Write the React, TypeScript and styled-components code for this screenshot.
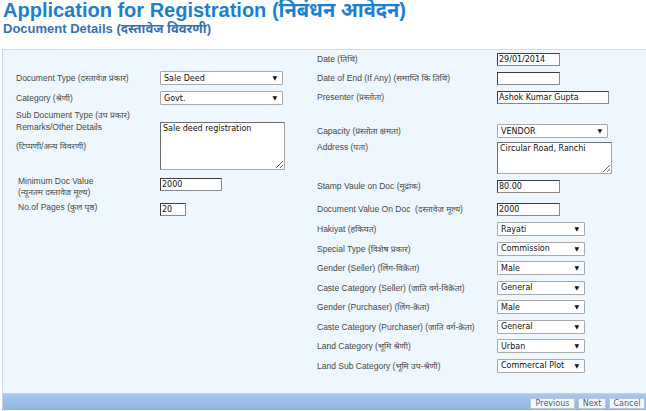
import React from 'react';
import styled, {createGlobalStyle} from 'styled-components';

const GlobalStyle = createGlobalStyle`
  html, body {
    margin: 0;
    padding: 0;
    background: #ffffff;
  }
  body {
    font-family: 'Liberation Sans', Arial, 'Noto Sans Devanagari', 'Noto Sans', sans-serif;
  }
`;

const Page = styled.div`
  width: 646px;
  height: 411px;
  display: flex;
  flex-direction: column;
  overflow: hidden;
`;

const Header = styled.div`
  height: 49px;
  padding-left: 3px;
`;

const Title = styled.h1`
  margin: 0;
  font-size: 20px;
  line-height: 21px;
  font-weight: bold;
  color: #1b80d1;
`;

const SubTitle = styled.h2`
  margin: 0;
  font-size: 13px;
  line-height: 15px;
  font-weight: bold;
  color: #3a70b2;
`;

const Panel = styled.div`
  flex: 1;
  display: flex;
  flex-direction: column;
  margin-left: 2px;
  border-top: 1px solid #cfdceb;
  border-left: 1px solid #c8d7e8;
  background: #eef7fe;
`;

const Columns = styled.div`
  flex: 1;
  display: grid;
  grid-template-columns: 301px 1fr;
  padding-left: 13px;
`;

const Column = styled.div<{$top: number}>`
  display: flex;
  flex-direction: column;
  padding-top: ${p => p.$top}px;
`;

const Row = styled.div<{$h: number}>`
  display: flex;
  align-items: flex-start;
  height: ${p => p.$h}px;
  flex-shrink: 0;
`;

const Label = styled.div<{$w: number; $lh?: number; $indent?: number; $shift?: number}>`
  width: ${p => p.$w}px;
  flex-shrink: 0;
  padding-left: ${p => p.$indent ?? 0}px;
  margin-top: ${p => p.$shift ?? 0}px;
  box-sizing: border-box;
  font-size: 8.5px;
  line-height: ${p => p.$lh ?? 13}px;
  color: #474747;
  white-space: nowrap;
`;

const LabelLine = styled.div<{$gap?: number}>`
  margin-top: ${p => p.$gap ?? 0}px;
`;

const TextInput = styled.input<{$w: number}>`
  width: ${p => p.$w}px;
  height: 13px;
  box-sizing: border-box;
  margin: 0;
  padding: 0 1px;
  border: 1px solid #3c3c3c;
  border-right-color: #8a8a8a;
  border-bottom-color: #8a8a8a;
  background: #ffffff;
  font-family: 'DejaVu Sans', Verdana, sans-serif;
  font-size: 8px;
  color: #111;
  outline: none;
`;

const TextArea = styled.textarea<{$w: number; $h: number}>`
  width: ${p => p.$w}px;
  height: ${p => p.$h}px;
  box-sizing: border-box;
  margin: 0;
  padding: 1px 2px;
  border: 1px solid #6e6e6e;
  border-right-color: #a8a8a8;
  border-bottom-color: #a8a8a8;
  background: #ffffff;
  font-family: 'DejaVu Sans', Verdana, sans-serif;
  font-size: 8px;
  line-height: 10px;
  color: #111;
  outline: none;
`;

const Select = styled.div<{$w: number}>`
  width: ${p => p.$w}px;
  height: 14px;
  box-sizing: border-box;
  display: flex;
  align-items: center;
  justify-content: space-between;
  padding: 0 5px 0 3px;
  border: 1px solid #a9a9a9;
  border-radius: 1px;
  background: #ffffff;
  font-family: 'DejaVu Sans', Verdana, sans-serif;
  font-size: 8px;
  color: #111;
  white-space: nowrap;
`;

const Arrow = styled.span`
  font-size: 6px;
  line-height: 1;
  color: #111;
`;

const Footer = styled.div`
  height: 16px;
  display: flex;
  justify-content: flex-end;
  align-items: center;
  gap: 3px;
  padding-right: 1px;
  border-top: 1px solid #bcd4f0;
  background: linear-gradient(#a9c8ee, #90b6e3);
  margin-bottom: 1px;
`;

const Button = styled.button<{$w: number}>`
  width: ${p => p.$w}px;
  height: 11px;
  margin-top: 3px;
  padding: 0;
  border: 1px solid #b8c8dc;
  background: #f5f7fa;
  font-family: 'DejaVu Sans', Verdana, sans-serif;
  font-size: 8px;
  line-height: 9px;
  color: #3f5f90;
`;

function Dropdown({value, width}: {value: string; width: number}) {
  return (
    <Select $w={width}>
      <span>{value}</span>
      <Arrow>▼</Arrow>
    </Select>
  );
}

const rightSelects = [
  ['Hakiyat (हकियत)', 'Rayati'],
  ['Special Type (विशेष प्रकार)', 'Commission'],
  ['Gender (Seller) (लिंग-विक्रेता)', 'Male'],
  ['Caste Category (Seller) (जाति वर्ग-विक्रेता)', 'General'],
  ['Gender (Purchaser) (लिंग-क्रेता)', 'Male'],
  ['Caste Category (Purchaser) (जाति वर्ग-क्रेता)', 'General'],
  ['Land Category (भूमि श्रेणी)', 'Urban'],
  ['Land Sub Category (भूमि उप-श्रेणी)', 'Commercal Plot'],
];

function App() {
  return (
    <Page>
      <GlobalStyle />
      <Header>
        <Title>Application for Registration (निबंधन आवेदन)</Title>
        <SubTitle>Document Details (दस्तावेज विवरणी)</SubTitle>
      </Header>
      <Panel>
        <Columns>
          <Column $top={21}>
            <Row $h={20}>
              <Label $w={144} $lh={14}>Document Type (दस्तावेज प्रकार)</Label>
              <Dropdown value="Sale Deed" width={123} />
            </Row>
            <Row $h={18}>
              <Label $w={144} $lh={14}>Category (श्रेणी)</Label>
              <Dropdown value="Govt." width={123} />
            </Row>
            <Row $h={13}>
              <Label $w={144}>Sub Document Type (उप प्रकार)</Label>
            </Row>
            <Row $h={56}>
              <Label $w={144} $lh={10}>
                <LabelLine>Remarks/Other Details</LabelLine>
                <LabelLine $gap={9}>(टिप्पणी/अन्य विवरणी)</LabelLine>
              </Label>
              <TextArea $w={125} $h={48} readOnly value="Sale deed registration" />
            </Row>
            <Row $h={25}>
              <Label $w={144} $lh={11} $indent={2} $shift={-2}>
                <LabelLine>Minimum Doc Value</LabelLine>
                <LabelLine>(न्यूनतम दस्तावेज मूल्य)</LabelLine>
              </Label>
              <TextInput $w={62} readOnly value="2000" />
            </Row>
            <Row $h={13}>
              <Label $w={144} $lh={9} $indent={2}>No.of Pages (कुल पृष्ठ)</Label>
              <TextInput $w={26} readOnly value="20" />
            </Row>
          </Column>

          <Column $top={3}>
            <Row $h={19}>
              <Label $w={180}>Date (तिथि)</Label>
              <TextInput $w={63} readOnly value="29/01/2014" />
            </Row>
            <Row $h={19}>
              <Label $w={180}>Date of End (If Any) (समाप्ति कि तिथि)</Label>
              <TextInput $w={63} readOnly value="" />
            </Row>
            <Row $h={33}>
              <Label $w={180}>Presenter (प्रस्तोता)</Label>
              <TextInput $w={112} readOnly value="Ashok Kumar Gupta" />
            </Row>
            <Row $h={18}>
              <Label $w={180} $lh={14}>Capacity (प्रस्तोता क्षमता)</Label>
              <Dropdown value="VENDOR" width={111} />
            </Row>
            <Row $h={38}>
              <Label $w={180} $lh={10}>Address (पता)</Label>
              <TextArea $w={115} $h={32} readOnly value="Circular Road, Ranchi" />
            </Row>
            <Row $h={23}>
              <Label $w={180}>Stamp Vaule on Doc (मुद्रांक)</Label>
              <TextInput $w={63} readOnly value="80.00" />
            </Row>
            <Row $h={19}>
              <Label $w={180}>Document Value On Doc&nbsp; (दस्तावेज मूल्य)</Label>
              <TextInput $w={63} readOnly value="2000" />
            </Row>
            {rightSelects.map(([label, value]) => (
              <Row $h={19.5} key={label}>
                <Label $w={180} $lh={14}>{label}</Label>
                <Dropdown value={value} width={88} />
              </Row>
            ))}
          </Column>
        </Columns>
        <Footer>
          <Button $w={45}>Previous</Button>
          <Button $w={28}>Next</Button>
          <Button $w={36}>Cancel</Button>
        </Footer>
      </Panel>
    </Page>
  );
}

export default App;
